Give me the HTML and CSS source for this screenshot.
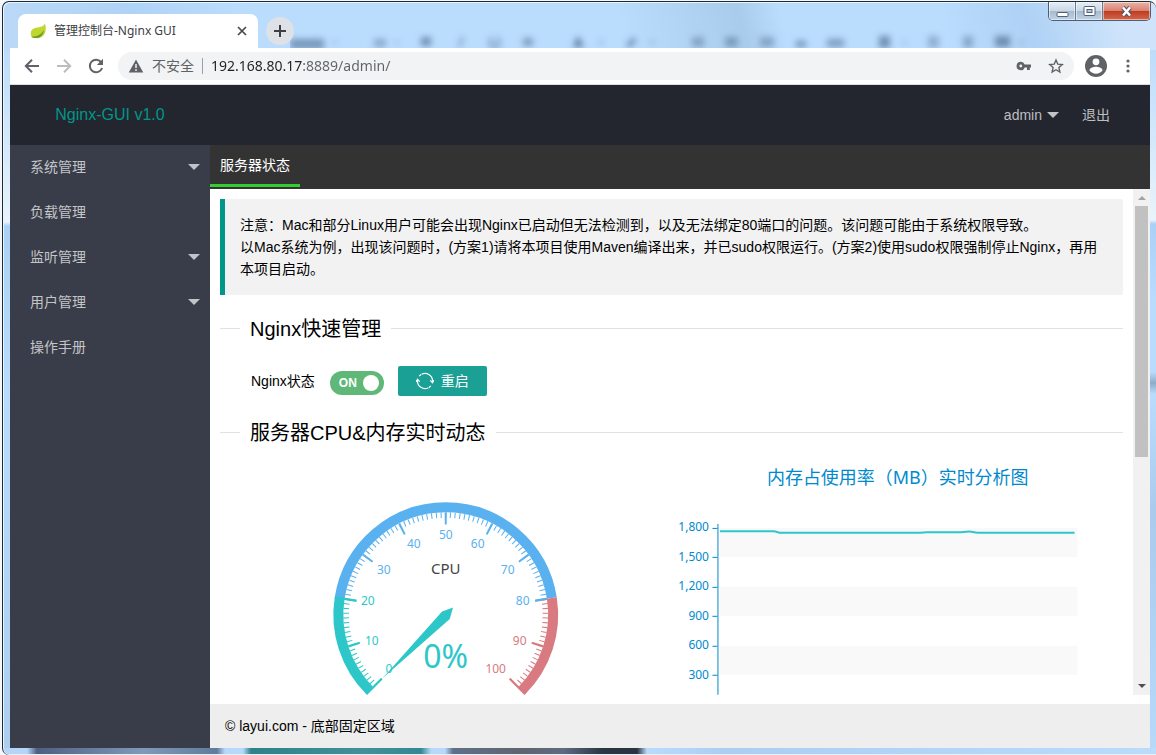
FILE: index.html
```
<!DOCTYPE html>
<html lang="zh-CN">
<head>
  <meta charset="UTF-8" />
  <meta name="viewport" content="width=device-width, initial-scale=1.0"/>
  <title>管理控制台-Nginx GUI</title>
  <link rel="stylesheet" href="styles.css">
</head>
<body>
  <div class="window">
    <!-- 标题栏 -->
    <div class="titlebar">
      <svg class="glass-blur" width="780" height="20" viewBox="290 28 780 20" aria-hidden="true">
        <g fill="#3f5f82">
          <rect x="290" y="39" width="34" height="10" opacity=".55"/>
          <rect x="333" y="41" width="4" height="3" opacity=".3"/>
          <rect x="374" y="39" width="12" height="8" opacity=".4"/>
          <rect x="395" y="41" width="4" height="3" opacity=".3"/>
          <rect x="421" y="37" width="10" height="9" opacity=".6"/>
          <path d="M461 37h3l-3 10h-3z" opacity=".5"/>
          <path d="M489 37h3v8h5v-8h3v11h-11z" opacity=".5"/>
          <rect x="523" y="38" width="10" height="8" opacity=".5"/>
          <path d="M578 36l6 11h-11z" opacity=".8"/>
          <rect x="599" y="41" width="4" height="3" opacity=".4"/>
          <path d="M626 45l8-8 2 4-7 7z" opacity=".7"/>
          <rect x="650" y="41" width="4" height="3" opacity=".4"/>
          <rect x="692" y="37" width="12" height="10" opacity=".4"/>
          <rect x="725" y="37" width="13" height="10" opacity=".45"/>
          <rect x="760" y="37" width="14" height="10" opacity=".4"/>
          <rect x="796" y="41" width="10" height="6" opacity=".6"/>
          <rect x="827" y="39" width="17" height="8" opacity=".5"/>
          <rect x="879" y="36" width="11" height="12" opacity=".6"/>
          <rect x="903" y="41" width="4" height="3" opacity=".3"/>
          <rect x="928" y="36" width="11" height="12" opacity=".35"/>
          <rect x="963" y="36" width="10" height="12" opacity=".4"/>
          <rect x="995" y="36" width="15" height="11" opacity=".6"/>
          <rect x="1019" y="41" width="4" height="3" opacity=".3"/>
        </g>
      </svg>
      <div class="browser-tab">
        <svg class="favicon" width="16" height="16" viewBox="0 0 16 16">
          <path d="M15 0.5c1.500 5 .8 9.500-2 12.500-2.500 2.700-7.500 2.800-10 1.500C.5 13 .2 9.500 1.500 7.500 3.500 4.300 7.500 5 11 3.800 13 3.200 14.300 2 15 .5z" fill="#c1d72e"/>
          <path d="M1 13.500c5 .5 10-1.500 13-6.500-.3 3-2 6-4.500 7.300-3 1.400-6.500.9-8.500-.8z" fill="#6c9a2b"/>
        </svg>
        <span class="tab-title">管理控制台-Nginx GUI</span>
        <button class="tab-close" aria-label="关闭标签页">
          <svg width="10" height="10" viewBox="0 0 10 10"><path d="M1 1l8 8M9 1l-8 8" stroke="#45494d" stroke-width="1.700"/></svg>
        </button>
      </div>
      <button class="new-tab" aria-label="新标签页">
        <svg width="12" height="12" viewBox="0 0 12 12"><path d="M6 0v12M0 6h12" stroke="#3c4043" stroke-width="2"/></svg>
      </button>
      <div class="win-buttons">
        <button class="win-min" aria-label="最小化">
          <svg width="13" height="11" viewBox="0 0 13 11"><rect x="1" y="6.500" width="11" height="4" rx="1" fill="#fff" stroke="#50607a"/></svg>
        </button>
        <button class="win-max" aria-label="最大化">
          <svg width="13" height="11" viewBox="0 0 13 11"><rect x="1" y=".5" width="11" height="9" rx="1" fill="#fff" stroke="#50607a"/><rect x="4" y="3.500" width="5" height="3" fill="#b5c9e0" stroke="#50607a"/></svg>
        </button>
        <button class="win-close" aria-label="关闭">
          <svg width="13" height="11" viewBox="0 0 13 11"><path d="M3 1.500l7 8M10 1.500l-7 8" stroke="#50506a" stroke-width="4.500"/><path d="M3 1.500l7 8M10 1.500l-7 8" stroke="#fff" stroke-width="2.600"/></svg>
        </button>
      </div>
    </div>

    <!-- 地址栏 -->
    <div class="toolbar">
      <button class="tool" aria-label="后退">
        <svg width="16" height="16" viewBox="0 0 16 16"><path d="M15 8H2.500M8 1.800L1.800 8 8 14.200" fill="none" stroke="#5f6368" stroke-width="2"/></svg>
      </button>
      <button class="tool" aria-label="前进">
        <svg width="16" height="16" viewBox="0 0 16 16"><path d="M1 8h12.500M8 1.800L14.200 8 8 14.200" fill="none" stroke="#babcbe" stroke-width="2"/></svg>
      </button>
      <button class="tool" aria-label="刷新">
        <svg width="16" height="16" viewBox="0 0 16 16"><path d="M13.300 4.300A6.300 6.300 0 1 0 14.100 10" fill="none" stroke="#5f6368" stroke-width="2"/><path d="M15 .8V7H8.800z" fill="#5f6368"/></svg>
      </button>
      <div class="omnibox">
        <svg width="16" height="16" viewBox="0 0 16 16"><path d="M8 1.500L15.300 14.500H.7z" fill="#5f6368"/><path d="M8 6v4M8 11.300v1.700" stroke="#f1f3f4" stroke-width="1.500"/></svg>
        <label class="insecure" for="url">不安全</label>
        <input class="url" id="url" type="text" value="192.168.80.17:8889/admin/">
        <svg width="16" height="16" viewBox="0 0 16 16"><path d="M4.800 3.800a4.200 4.200 0 1 0 3.900 5.600H11V12h2.800V9.400H15V6.600H8.700A4.200 4.200 0 0 0 4.800 3.800zm0 2.800a1.400 1.400 0 1 1 0 2.800 1.400 1.400 0 0 1 0-2.800z" fill="#5f6368"/></svg>
        <svg class="star" width="16" height="16" viewBox="0 0 16 16"><path d="M8 2l1.800 4.200 4.500.4-3.400 3 1 4.400L8 11.700 4.100 14l1-4.400-3.400-3 4.500-.4z" fill="none" stroke="#5f6368" stroke-width="1.400"/></svg>
      </div>
      <button class="tool" aria-label="用户">
        <svg width="22" height="22" viewBox="0 0 22 22"><circle cx="11" cy="11" r="11" fill="#5f6368"/><circle cx="11" cy="6.800" r="3.400" fill="#fff"/><path d="M4.400 15.200c.8-2.600 4-3.500 6.600-3.500s5.800.9 6.600 3.500a8 8 0 0 1-13.200 0z" fill="#fff"/></svg>
      </button>
      <button class="tool menu" aria-label="菜单">
        <svg width="4" height="14" viewBox="0 0 4 14" fill="#5f6368"><circle cx="2" cy="2" r="1.600"/><circle cx="2" cy="7" r="1.600"/><circle cx="2" cy="12" r="1.600"/></svg>
      </button>
    </div>

    <!-- 页面 -->
    <header class="header">
      <div class="logo">Nginx-GUI v1.0</div>
      <nav class="user-nav">
        <a href="#">admin<i class="caret"></i></a>
        <a href="#">退出</a>
      </nav>
    </header>

    <div class="layout">
      <nav class="side">
        <a href="#">系统管理<i class="caret"></i></a>
        <a href="#">负载管理</a>
        <a href="#">监听管理<i class="caret"></i></a>
        <a href="#">用户管理<i class="caret"></i></a>
        <a href="#">操作手册</a>
      </nav>

      <main class="main">
        <div class="tabs"><a class="active" href="#">服务器状态</a></div>

        <div class="scroll">
          <div class="content">
            <blockquote class="notice">
              注意：Mac和部分Linux用户可能会出现Nginx已启动但无法检测到，以及无法绑定80端口的问题。该问题可能由于系统权限导致。<br>
              以Mac系统为例，出现该问题时，(方案1)请将本项目使用Maven编译出来，并已sudo权限运行。(方案2)使用sudo权限强制停止Nginx，再用本项目启动。
            </blockquote>

            <fieldset class="title"><legend>Nginx快速管理</legend></fieldset>
            <div class="controls">
              <label for="nginxStatus">Nginx状态</label>
              <span class="switch">
                <input type="checkbox" id="nginxStatus" checked>
                <em>ON</em>
              </span>
              <button class="btn">
                <svg width="18" height="18" viewBox="0 0 18 18" fill="none" stroke="#fff" stroke-width="1.200">
                  <path d="M5.500 2.300A7.500 7.500 0 0 1 16.500 9.500M12.500 15.700A7.500 7.500 0 0 1 1.500 8.500"/>
                  <path d="M14.300 8.300l2.200 2.400 1.500-2.600M3.700 9.700L1.500 7.300 0 9.900"/>
                  <path d="M5 2.500l-1.800 1.600M13 15.500l1.800-1.600"/>
                </svg>
                重启
              </button>
            </div>

            <fieldset class="title"><legend>服务器CPU&amp;内存实时动态</legend></fieldset>
            <div class="charts">
              <svg class="chart" viewBox="0 0 452 240">
                <g fill="none" stroke="#2ec7c9">
                  <path stroke-width="10" d="M150 236A107.500 107.500 0 0 1 119.800 143.200"/>
                  <path stroke-width="5.600" pathLength="200" stroke-dasharray="2.200 7.800" stroke-dashoffset="1.100" d="M155.500 230.500A99.700 99.700 0 0 1 127.500 144.400"/>
                  <path stroke-width="12" pathLength="200" stroke-dasharray="4.600 95.400" stroke-dashoffset="2.300" d="M157.800 228.200A96.500 96.500 0 0 1 130.700 144.900"/>
                </g>
                <g fill="none" stroke="#5ab1ef">
                  <path stroke-width="10" d="M119.800 143.200A107.500 107.500 0 0 1 332.200 143.200"/>
                  <path stroke-width="5.600" pathLength="600" stroke-dasharray="2.200 7.800" stroke-dashoffset="1.100" d="M127.500 144.400A99.700 99.700 0 0 1 324.500 144.400"/>
                  <path stroke-width="12" pathLength="600" stroke-dasharray="4.600 95.400" stroke-dashoffset="2.300" d="M130.700 144.900A96.500 96.500 0 0 1 321.300 144.900"/>
                </g>
                <g fill="none" stroke="#d87a80">
                  <path stroke-width="10" d="M332.200 143.200A107.500 107.500 0 0 1 302 236"/>
                  <path stroke-width="5.600" pathLength="200" stroke-dasharray="2.200 7.800" stroke-dashoffset="1.100" d="M324.500 144.400A99.700 99.700 0 0 1 296.500 230.500"/>
                  <path stroke-width="12" pathLength="200" stroke-dasharray="4.600 95.400" stroke-dashoffset="2.300" d="M321.300 144.900A96.500 96.500 0 0 1 294.200 228.200"/>
                </g>
                <!-- 0、20、80、100 处的长刻度 -->
                <g stroke-width="2">
                  <path d="M146.500 239.500L162 224M115 142.400L136.500 145.800" stroke="#2ec7c9"/>
                  <path d="M327 144L315.500 145.800" stroke="#5ab1ef"/>
                  <path d="M305.500 239.500L290 224" stroke="#d87a80"/>
                </g>
                <g class="dial" fill="#2ec7c9">
                  <text x="169" y="218">0</text>
                  <text x="152" y="190">10</text>
                  <text x="148" y="150">20</text>
                </g>
                <g class="dial" fill="#5ab1ef">
                  <text x="164" y="119">30</text>
                  <text x="194" y="93">40</text>
                  <text x="226" y="84">50</text>
                  <text x="258" y="93">60</text>
                  <text x="288" y="119">70</text>
                  <text x="303" y="150">80</text>
                </g>
                <g class="dial" fill="#d87a80">
                  <text x="300" y="190">90</text>
                  <text x="276" y="218">100</text>
                </g>
                <text class="dial-name" x="226" y="119">CPU</text>
                <polygon points="162.500,223.700 222.300,156.700 233.300,152.700 230,164.300" fill="#2ec7c9"/>
                <text class="dial-value" x="226" y="213">0%</text>
              </svg>

              <svg class="chart" viewBox="0 0 452 240">
                <text class="chart-title" x="226" y="29">内存占使用率（MB）实时分析图</text>
                <g fill="#f9f9f9">
                  <rect x="48" y="73" width="358" height="29"/>
                  <rect x="48" y="132" width="358" height="29"/>
                  <rect x="48" y="191" width="358" height="29"/>
                </g>
                <path d="M46 69v171M40.500 73.500h5M40.500 102.500h5M40.500 132.500h5M40.500 161.500h5M40.500 191.500h5M40.500 220.500h5" stroke="#008acd" fill="none"/>
                <g class="axis">
                  <text x="37" y="76">1,800</text>
                  <text x="37" y="106">1,500</text>
                  <text x="37" y="135">1,200</text>
                  <text x="37" y="165">900</text>
                  <text x="37" y="194">600</text>
                  <text x="37" y="224">300</text>
                </g>
                <path d="M48 76.300H102c3 0 3 1.500 6 1.500H249l6-.4H289c5 0 6-.8 9-.8s4 1.200 8 1.200H403" fill="none" stroke="#2ec7c9" stroke-width="2"/>
              </svg>
            </div>
          </div>

          <div class="scrollbar" aria-hidden="true">
            <i class="up"></i>
            <i class="thumb"></i>
            <i class="down"></i>
          </div>
        </div>

        <footer class="footer">© layui.com - 底部固定区域</footer>
      </main>
    </div>
  </div>
</body>
</html>
```
FILE: styles.css
```
* {
  box-sizing: border-box;
}

html, body {
  margin: 0;
  padding: 0;
}

body {
  height: 100vh;
  padding: 1px 0 0 2px;
  overflow: hidden;
  background: #f4f8fc;
  font: 14px/24px "Liberation Sans", "Noto Sans CJK SC", sans-serif;
  color: #000;
}

a {
  color: inherit;
  text-decoration: none;
}

button {
  padding: 0;
  border: none;
  background: none;
  font: inherit;
  cursor: pointer;
}

svg {
  display: block;
  flex: none;
}

/* 窗口边框 */
.window {
  display: flex;
  flex-direction: column;
  height: 100%;
  padding: 0 6px 7px 7px;
  border: 1px solid #1d2b33;
  border-width: 1px 0 0 1px;
  border-radius: 7px 7px 0 7px;
  box-shadow: inset 1px 1px 0 #eaf6ff, inset 0 -1px 0 #e8eff8;
  background:
    linear-gradient(90deg, #b5d5f8 24px, #4d5f83 34px, #7f9ab8 140px, #5f7c9c 214px, #b5d8fb 222px, #b5d8fb 240px, #2d828c 248px, #429099 360px, #338894 418px, #b5d8fb 428px, #b5d8fb 442px, #5f7088 450px, #5f6470 520px, #5f6b82 560px, #283543 600px, #2a3341 634px, #b9dcfd 644px, #aacdf2 720px, #b9dcfd 100%) 0 100% / 100% 7px no-repeat,
    linear-gradient(#bcdcfb, #e9f3fb 170px, #abd0f5 174px, #b9dcfd 250px, #b9dcfd 322px, #8dabc6 333px, #b9dcfd 344px, #aacbec 460px, #b9dcfd) 100% 48px / 6px 100% no-repeat,
    linear-gradient(#bcdcfb, #e9f3fb 172px, #abd0f5 176px, #b9dcfd 340px, #aacbec) 0 48px / 7px 100% no-repeat,
    linear-gradient(75deg, #cde2f7, #afd3f7 24%, #badcfd 32%, #badcfd 60%, #aaccec 69%, #badcfd 72%, #badcfd 84%, #aed1f5 90%, #cfe4fb 97%);
}

.titlebar {
  position: relative;
  display: flex;
  flex: none;
  height: 46px;
}

.glass-blur {
  position: absolute;
  left: 280px;
  bottom: 0;
  overflow: hidden;
}

.glass-blur g {
  filter: blur(3px);
}

.browser-tab {
  position: relative;
  display: flex;
  align-items: center;
  width: 240px;
  margin: 12px 8px 0;
  padding: 0 11px 0 12px;
  background: #fff;
  border-radius: 8px 8px 0 0;
}

.tab-title {
  flex: 1;
  margin-left: 8px;
  font: 12px/16px "Noto Sans", "Noto Sans CJK SC", sans-serif;
  color: #3c4043;
}

.tab-close {
  display: flex;
}

.new-tab {
  position: relative;
  display: flex;
  align-items: center;
  justify-content: center;
  width: 28px;
  height: 28px;
  margin-top: 15px;
  border-radius: 50%;
  background: #dee1e6;
}

.win-buttons {
  display: flex;
  height: 19px;
  margin: 0 -1px 0 auto;
  border: 1px solid #4f6073;
  border-top: none;
  border-radius: 0 0 5px 5px;
  overflow: hidden;
}

.win-buttons button {
  display: flex;
  align-items: center;
  justify-content: center;
  width: 27px;
  border-right: 1px solid #6a7b8e;
  background: linear-gradient(#e6eef7, #c9d7e6 48%, #a6b9cd 50%, #bfd2e6);
  box-shadow: inset 0 0 0 1px rgba(255, 255, 255, 0.5);
}

.win-buttons .win-close {
  width: 47px;
  border-right: none;
  background: linear-gradient(#eab3a6, #d98372 48%, #bd3a22 50%, #d2674a);
}

.toolbar {
  display: flex;
  flex: none;
  align-items: center;
  height: 37px;
  padding: 0 20px 0 14px;
  gap: 16px;
  background: #fff;
  border-bottom: 1px solid #dcdedd;
}

.tool {
  display: flex;
}

.menu {
  margin-left: 3px;
}

.omnibox {
  display: flex;
  flex: 1;
  align-items: center;
  height: 28px;
  margin: 0 -5px 0 -2px;
  padding: 0 10px;
  gap: 8px;
  border-radius: 14px;
  background: #f1f3f4;
  font: 14px/20px "Noto Sans", "Noto Sans CJK SC", sans-serif;
}

.insecure {
  padding-right: 8px;
  border-right: 1px solid #9aa0a6;
  line-height: 16px;
  color: #5f6368;
}

.url {
  flex: 1;
  min-width: 0;
  padding: 0;
  border: none;
  outline: none;
  font: inherit;
  color: transparent;
  background: linear-gradient(90deg, #202124 91px, #5f6368 91px);
  -webkit-background-clip: text;
  background-clip: text;
}

.star {
  margin-left: 8px;
}

/* 顶部 */
.header {
  display: flex;
  flex: none;
  justify-content: space-between;
  height: 60px;
  line-height: 60px;
  background: #23262e;
}

.logo {
  width: 200px;
  text-align: center;
  font-size: 16px;
  color: #009688;
}

.user-nav {
  display: flex;
  gap: 23px;
  padding-right: 40px;
  color: #bdbec0;
}

.user-nav a {
  display: flex;
  align-items: center;
  gap: 5px;
}

.caret {
  border: 6px solid transparent;
  border-top-color: #c2c2c8;
  border-bottom: none;
}

/* 左侧导航 */
.layout {
  display: flex;
  flex: 1;
  min-height: 0;
}

.side {
  flex: none;
  width: 200px;
  background: #393d49;
  color: #c4c5c8;
}

.side a {
  display: flex;
  align-items: center;
  justify-content: space-between;
  height: 45px;
  padding: 0 10px 1px 20px;
}

/* 主体 */
.main {
  display: flex;
  flex: 1;
  flex-direction: column;
  min-width: 0;
  background: #fff;
}

.tabs {
  flex: none;
  height: 44px;
  background: #333;
}

.tabs a {
  display: inline-block;
  padding: 2px 10px 0;
  border-bottom: 3px solid #32cd32;
  line-height: 37px;
  color: #fff;
}

.scroll {
  display: flex;
  flex: 1;
  min-height: 0;
  margin-bottom: 9px;
  overflow: hidden;
}

.content {
  flex: 1;
  min-width: 0;
  padding: 10px;
}

.notice {
  margin: 0 0 18px;
  padding: 15px;
  border-left: 5px solid #009688;
  border-radius: 0 2px 2px 0;
  background: #f2f2f2;
  line-height: 22px;
}

.title {
  margin: 0;
  padding: 0;
  border: none;
  border-top: 1px solid #e2e2e2;
}

.title legend {
  margin-left: 20px;
  padding: 2px 10px 0;
  font-size: 20px;
  line-height: 28px;
}

.controls {
  display: flex;
  align-items: center;
  height: 74px;
  padding: 2px 0 0 31px;
}

.switch {
  display: grid;
  align-items: center;
  margin: 4px 14px 0 15px;
}

.switch input,
.switch em {
  grid-area: 1 / 1;
}

.switch input {
  appearance: none;
  display: flex;
  justify-content: flex-end;
  align-items: center;
  width: 54px;
  height: 24px;
  margin: 0;
  padding: 0 5px;
  border-radius: 12px;
  background: #5fb878;
}

.switch input::before {
  content: "";
  width: 16px;
  height: 16px;
  border-radius: 50%;
  background: #fff;
}

.switch em {
  padding-left: 9px;
  font-style: normal;
  font-size: 12px;
  font-weight: bold;
  color: #fff;
  pointer-events: none;
}

.btn {
  display: flex;
  align-items: center;
  height: 30px;
  padding: 0 18px;
  gap: 7px;
  border-radius: 2px;
  background: #1aa094;
  color: #fff;
}

/* 图表 */
.charts {
  display: flex;
  padding-top: 8px;
}

.chart {
  flex: 1;
  min-width: 0;
  font-family: "Noto Sans", "Noto Sans CJK SC", sans-serif;
}

.dial {
  font-size: 12px;
  text-anchor: middle;
}

.dial-name {
  font-size: 15px;
  text-anchor: middle;
  fill: #444;
}

.dial-value {
  font-size: 32px;
  text-anchor: middle;
  fill: #2ec7c9;
}

.chart-title {
  font-size: 18px;
  text-anchor: middle;
  fill: #008acd;
}

.axis {
  font-size: 12px;
  text-anchor: end;
  fill: #008acd;
}

/* 滚动条 */
.scrollbar {
  display: flex;
  flex: none;
  flex-direction: column;
  align-items: center;
  width: 17px;
  padding: 7px 0;
  background: #f1f1f1;
}

.scrollbar .up {
  border: 4px solid transparent;
  border-top: none;
  border-bottom-color: #a3a3a3;
}

.scrollbar .thumb {
  width: 13px;
  height: 51%;
  margin-top: 6px;
  background: #c1c1c1;
}

.scrollbar .down {
  margin-top: auto;
  border: 4px solid transparent;
  border-bottom: none;
  border-top-color: #505050;
}

.footer {
  flex: none;
  height: 44px;
  padding: 0 15px;
  line-height: 44px;
  background: #eee;
}
```
